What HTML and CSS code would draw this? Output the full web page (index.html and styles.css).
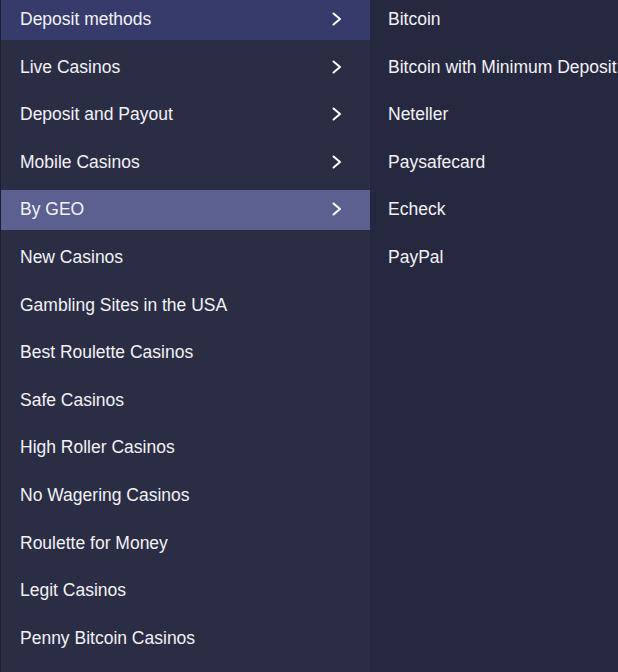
FILE: index.html
```html
<!DOCTYPE html>
<html lang="en">
<head>
<meta charset="utf-8">
<title>Menu</title>
<link rel="stylesheet" href="styles.css">
</head>
<body>
<div class="menu">
  <ul class="primary">
    <li class="item active"><span>Deposit methods</span><svg class="chev" viewBox="0 0 12 14"><path d="M2.5 1.5 L9 7 L2.5 12.5"/></svg></li>
    <li class="item"><span>Live Casinos</span><svg class="chev" viewBox="0 0 12 14"><path d="M2.5 1.5 L9 7 L2.5 12.5"/></svg></li>
    <li class="item"><span>Deposit and Payout</span><svg class="chev" viewBox="0 0 12 14"><path d="M2.5 1.5 L9 7 L2.5 12.5"/></svg></li>
    <li class="item"><span>Mobile Casinos</span><svg class="chev" viewBox="0 0 12 14"><path d="M2.5 1.5 L9 7 L2.5 12.5"/></svg></li>
    <li class="item hover"><span>By GEO</span><svg class="chev" viewBox="0 0 12 14"><path d="M2.5 1.5 L9 7 L2.5 12.5"/></svg></li>
    <li class="item"><span>New Casinos</span></li>
    <li class="item"><span>Gambling Sites in the USA</span></li>
    <li class="item"><span>Best Roulette Casinos</span></li>
    <li class="item"><span>Safe Casinos</span></li>
    <li class="item"><span>High Roller Casinos</span></li>
    <li class="item"><span>No Wagering Casinos</span></li>
    <li class="item"><span>Roulette for Money</span></li>
    <li class="item"><span>Legit Casinos</span></li>
    <li class="item"><span>Penny Bitcoin Casinos</span></li>
  </ul>
  <ul class="secondary">
    <li class="item"><span>Bitcoin</span></li>
    <li class="item"><span>Bitcoin with Minimum Deposit</span></li>
    <li class="item"><span>Neteller</span></li>
    <li class="item"><span>Paysafecard</span></li>
    <li class="item"><span>Echeck</span></li>
    <li class="item"><span>PayPal</span></li>
  </ul>
</div>
</body>
</html>
```

FILE: styles.css
```css
html, body {
  margin: 0;
  padding: 0;
  background: #262840;
}
body {
  font-family: "Liberation Sans", Arial, sans-serif;
  font-size: 17.5px;
  color: #f2f2f5;
  overflow: hidden;
}
.menu {
  display: flex;
  height: 672px;
}
ul {
  list-style: none;
  margin: 0;
  padding: 0;
}
.primary {
  width: 369px;
  flex: none;
  background: #2b2d45;
  border-left: 1px solid #1c1e30;
}
.secondary {
  flex: 1;
  background: #262840;
  padding-left: 18px;
  white-space: nowrap;
  overflow: hidden;
}
.item {
  height: 40px;
  margin-bottom: 7.6px;
  display: flex;
  align-items: center;
  justify-content: space-between;
}
.primary .item {
  padding: 0 27px 0 19px;
}
.item span {
  line-height: 20px;
  margin-top: -2px;
}
.primary .active {
  background: #373b6b;
}
.primary .hover {
  background: #5b6090;
}
.chev {
  width: 12px;
  height: 14px;
  fill: none;
  stroke: #ffffff;
  stroke-width: 2;
  stroke-linecap: round;
  stroke-linejoin: round;
  margin-top: -2px;
}
```
